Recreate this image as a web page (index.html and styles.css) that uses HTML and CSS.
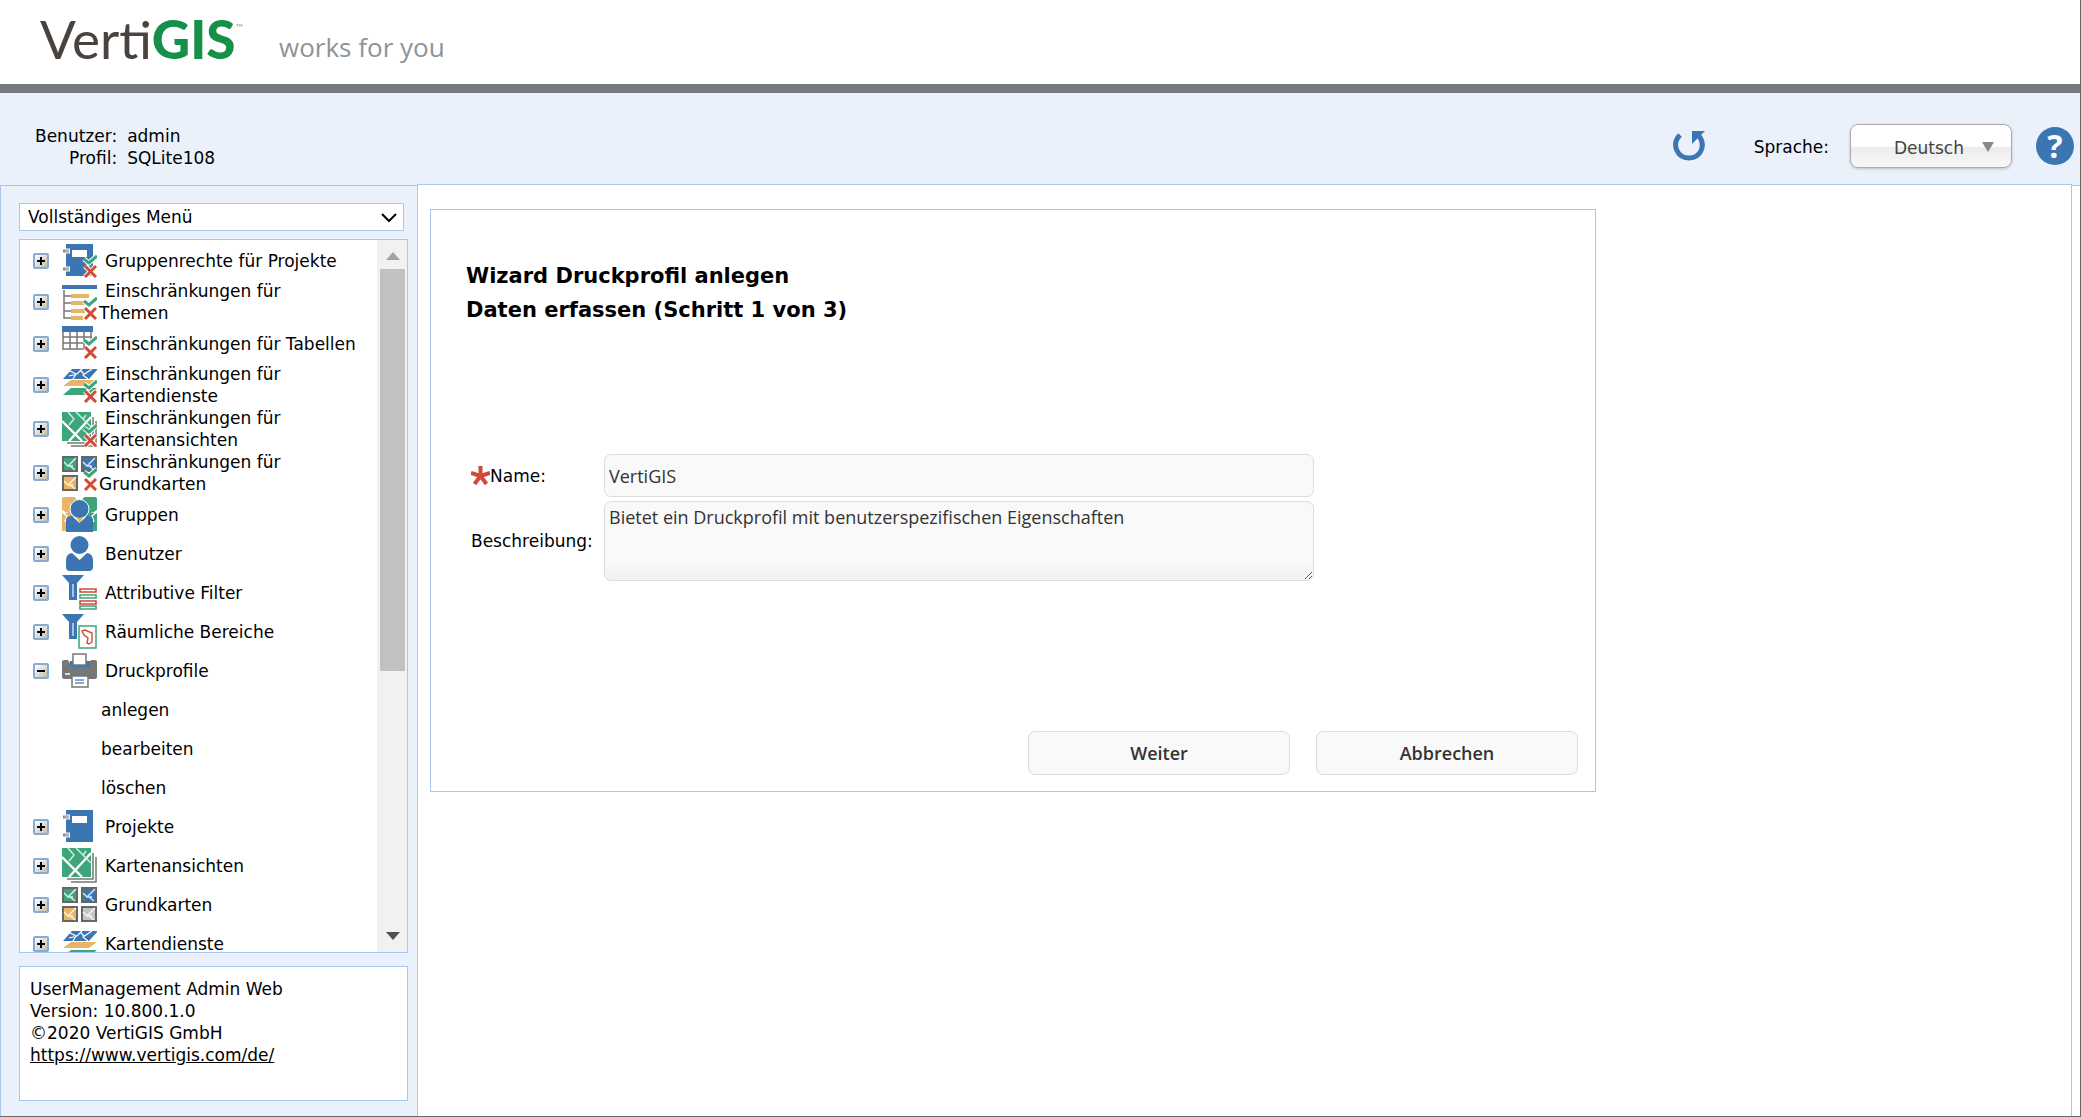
FILE: index.html
```html
<!DOCTYPE html>
<html lang="de">
<head>
<meta charset="utf-8">
<title>UserManagement Admin Web</title>
<link rel="stylesheet" href="styles.css">
</head>
<body>
<svg class="sprite" aria-hidden="true">
  <symbol id="limit" viewBox="0 0 35 35">
    <path d="M22 16l5 4 8-7M23 23l11 11M34 23L23 34" fill="none" stroke="#fff" stroke-width="5"/>
    <path d="M22 16l5 4 8-7" fill="none" stroke="#3da57a" stroke-width="3"/>
    <path d="M23 23l11 11M34 23L23 34" fill="none" stroke="#d04a35" stroke-width="3"/>
  </symbol>
  <symbol id="project" viewBox="0 0 35 35">
    <path d="M4 1h27v32H4z" fill="#3c76b2"/><path d="M10 7h15v7H10z" fill="#fff"/>
    <path d="M1 8h7M1 26h7" stroke="#fff" stroke-width="5"/><path d="M1 8h6M1 26h6" stroke="#8b8b8b" stroke-width="3"/><path d="M3 8h5M3 26h5" stroke="#ddd" stroke-width="1"/>
  </symbol>
  <symbol id="themes" viewBox="0 0 35 35">
    <path d="M0 0h35v4H0z" fill="#3c76b2"/>
    <path d="M2 5v28h8M2 11h8M2 18h8M2 26h8" fill="none" stroke="#777" stroke-width="1.5"/>
    <path d="M9 9h18v4H9zM9 16h17v4H9zM9 24h14v4H9zM9 31h12v4H9z" fill="#e9b563"/>
  </symbol>
  <symbol id="grid" viewBox="0 0 35 35">
    <path d="M1 3v20h25M1 11h29M1 17h25M8 6v17M15 6v17M22 6v17M29 6v8" fill="none" stroke="#777" stroke-width="1.5"/>
    <path d="M0 0h31v6H0z" fill="#3c76b2"/>
  </symbol>
  <symbol id="layers" viewBox="0 0 35 35">
    <path d="M9 20h26l-8 7H1z" fill="#3da57a"/>
    <path d="M9 10h26l-8 9H1z" fill="#fff"/><path d="M9 12h26l-8 6H1z" fill="#e9b563"/>
    <path d="M10 1h26l-9 10H1z" fill="#3c76b2"/>
    <path d="M8 3l6 3-3 5M20 1l-5 5-8 2M30 1l-9 6 5 4M22 6l-4-4" fill="none" stroke="#fff" stroke-width="1.2"/>
  </symbol>
  <symbol id="view" viewBox="0 0 35 35">
    <path d="M31 5v26H5M34 9v25H9" fill="none" stroke="#777" stroke-width="1.5"/>
    <path d="M0 0h29v29H0z" fill="#3da57a"/>
    <path d="M0 9l20 20M29 5L7 29" stroke="#fff" stroke-width="2.4"/>
    <path d="M6 0l6 7-5 6M14 0l15 15M21 7l3-4" fill="none" stroke="#cfe9dd" stroke-width="1.5"/>
  </symbol>
  <symbol id="tile" viewBox="0 0 16 16">
    <path d="M1 1h14v14H1z" stroke="#666" stroke-width="2"/>
    <path d="M14 2L6 10 2 6M7 9l6 5M6 10h5" fill="none" stroke="#fff" stroke-width="1.5" opacity=".8"/>
  </symbol>
  <symbol id="groups" viewBox="0 0 35 35">
    <circle cx="7" cy="7" r="9" fill="#e9b563"/><circle cx="28" cy="7" r="9" fill="#3da57a"/>
    <path d="M0 16h11v18H0z" fill="#e9b563"/><path d="M24 16h11v18H24z" fill="#3da57a"/>
    <path d="M0 15l5 4-2 6M35 15l-5 4 2 6" fill="none" stroke="#fff" stroke-width="1.5"/>
    <circle cx="17.5" cy="12" r="9.500" fill="#3c76b2" stroke="#fff"/>
    <path d="M14 21h7l-3 5z" fill="#e9b563"/>
    <path d="M4 23q0-4 6-4l7.500 7L25 19q6 0 6 4v12H4z" fill="#3c76b2"/>
  </symbol>
  <symbol id="user" viewBox="0 0 35 35">
    <circle cx="17.5" cy="9" r="9" fill="#3c76b2"/>
    <path d="M4 24q0-6 6-7l7.500 7 7.500-7q6 1 6 7v7q0 4-4 4H8q-4 0-4-4z" fill="#3c76b2"/>
  </symbol>
  <symbol id="funnel" viewBox="0 0 35 35">
    <path d="M0 0h22l-7 8v17H7V8z" fill="#3c76b2"/><path d="M10 9v13h2V9z" fill="#a8c4e2"/>
  </symbol>
  <symbol id="attributes" viewBox="0 0 35 35">
    <use href="#funnel"/>
    <path d="M18 14h16v3H18zM18 26h16v3H18z" fill="#fff" stroke="#d04a35" stroke-width="1.6"/>
    <path d="M18 20h16v3H18zM18 31h16v3H18z" fill="#fff" stroke="#3da57a" stroke-width="1.6"/>
  </symbol>
  <symbol id="areas" viewBox="0 0 35 35">
    <use href="#funnel"/>
    <path d="M17 12h17v22H17z" fill="#fff" stroke="#3da57a" stroke-width="1.5"/>
    <path d="M20 17l3-1 7 3v9l-3 2-2-1 1-5-4-3z" fill="none" stroke="#d04a35" stroke-width="1.4"/>
  </symbol>
  <symbol id="printer" viewBox="0 0 35 35">
    <path d="M0 9q0-2 2-2h4l4 7h15l4-7h4q2 0 2 2v15q0 2-2 2H2q-2 0-2-2z" fill="#777"/>
    <path d="M8 8h20v4l-2 2H10l-2-2z" fill="#3c76b2"/>
    <path d="M11 1h13v11H11zM10 23h16v11H10z" fill="#fff" stroke="#777" stroke-width="1.5"/>
    <path d="M3 21h5" stroke="#fff" stroke-width="1.5"/>
    <path d="M13 27h9M13 30h9" stroke="#5b91cf" stroke-width="1.5"/>
  </symbol>
</svg>

<header class="brand">
  <div class="logo">Verti<b>GIS</b><sup>™</sup></div>
  <div class="claim">works for you</div>
</header>

<div class="session">
  <dl class="who">
    <dt>Benutzer:</dt><dd>admin</dd>
    <dt>Profil:</dt><dd>SQLite108</dd>
  </dl>
  <div class="tools">
    <button class="icon-button reload" type="button" aria-label="Neu laden">
      <svg width="32" height="32" viewBox="0 0 32 32"><path d="M7 5C-2 14 4 28 16 28S33 15 26 6" fill="none" stroke="#3c76b2" stroke-width="5"/><path d="M19 1h13L19 14z" fill="#3c76b2"/></svg>
    </button>
    <label for="language">Sprache:</label>
    <span class="language">
      <select id="language"><option>Deutsch</option></select>
      <svg class="caret" width="12" height="10" viewBox="0 0 12 10"><path d="M0 0h12L6 10z" fill="#888"/></svg>
    </span>
    <button class="icon-button help" type="button" aria-label="Hilfe">?</button>
  </div>
</div>

<div class="workspace">
  <aside class="sidebar">
    <div class="menu-picker">
      <select aria-label="Menü"><option>Vollständiges Menü</option></select>
      <svg class="caret" width="16" height="10" viewBox="0 0 16 10"><path d="M1 1l7 7 7-7" fill="none" stroke="#000" stroke-width="2"/></svg>
    </div>
    <nav class="tree">
      <ul>
        <li><button class="toggle" aria-label="Öffnen"></button><svg class="icon"><use href="#project"/><use href="#limit"/></svg><a href="#">Gruppenrechte für Projekte</a></li>
        <li><button class="toggle" aria-label="Öffnen"></button><svg class="icon"><use href="#themes"/><use href="#limit"/></svg><a href="#">Einschränkungen für<br>Themen</a></li>
        <li><button class="toggle" aria-label="Öffnen"></button><svg class="icon"><use href="#grid"/><use href="#limit" y="-2"/></svg><a href="#">Einschränkungen für Tabellen</a></li>
        <li><button class="toggle" aria-label="Öffnen"></button><svg class="icon"><use href="#layers"/><use href="#limit"/></svg><a href="#">Einschränkungen für<br>Kartendienste</a></li>
        <li><button class="toggle" aria-label="Öffnen"></button><svg class="icon"><use href="#view"/><use href="#limit"/></svg><a href="#">Einschränkungen für<br>Kartenansichten</a></li>
        <li><button class="toggle" aria-label="Öffnen"></button><svg class="icon"><use href="#tile" width="16" height="16" fill="#3da57a"/><use href="#tile" x="19" width="16" height="16" fill="#3c76b2"/><use href="#tile" y="19" width="16" height="16" fill="#e9b563"/><use href="#limit"/></svg><a href="#">Einschränkungen für<br>Grundkarten</a></li>
        <li><button class="toggle" aria-label="Öffnen"></button><svg class="icon"><use href="#groups"/></svg><a href="#">Gruppen</a></li>
        <li><button class="toggle" aria-label="Öffnen"></button><svg class="icon"><use href="#user"/></svg><a href="#">Benutzer</a></li>
        <li><button class="toggle" aria-label="Öffnen"></button><svg class="icon"><use href="#attributes"/></svg><a href="#">Attributive Filter</a></li>
        <li><button class="toggle" aria-label="Öffnen"></button><svg class="icon"><use href="#areas"/></svg><a href="#">Räumliche Bereiche</a></li>
        <li><button class="toggle open" aria-label="Schließen"></button><svg class="icon"><use href="#printer"/></svg><a href="#">Druckprofile</a></li>
        <li class="sub"><a href="#">anlegen</a></li>
        <li class="sub"><a href="#">bearbeiten</a></li>
        <li class="sub"><a href="#">löschen</a></li>
        <li><button class="toggle" aria-label="Öffnen"></button><svg class="icon"><use href="#project"/></svg><a href="#">Projekte</a></li>
        <li><button class="toggle" aria-label="Öffnen"></button><svg class="icon"><use href="#view"/></svg><a href="#">Kartenansichten</a></li>
        <li><button class="toggle" aria-label="Öffnen"></button><svg class="icon"><use href="#tile" width="16" height="16" fill="#3da57a"/><use href="#tile" x="19" width="16" height="16" fill="#3c76b2"/><use href="#tile" y="19" width="16" height="16" fill="#e9b563"/><use href="#tile" x="19" y="19" width="16" height="16" fill="#c4c4c4"/></svg><a href="#">Grundkarten</a></li>
        <li><button class="toggle" aria-label="Öffnen"></button><svg class="icon"><use href="#layers" y="4"/></svg><a href="#">Kartendienste</a></li>
      </ul>
      <div class="scrollbar" aria-hidden="true">
        <svg width="14" height="8" viewBox="0 0 14 8"><path d="M0 8h14L7 0z" fill="#a3a3a3"/></svg>
        <div class="track"><div class="thumb"></div></div>
        <svg width="14" height="8" viewBox="0 0 14 8"><path d="M0 0h14L7 8z" fill="#505050"/></svg>
      </div>
    </nav>
    <div class="about">
      UserManagement Admin Web<br>
      Version: 10.800.1.0<br>
      ©2020 VertiGIS GmbH<br>
      <a href="https://www.vertigis.com/de/">https://www.vertigis.com/de/</a>
    </div>
  </aside>

  <main class="content">
    <form class="wizard">
      <h1>Wizard Druckprofil anlegen<br>Daten erfassen (Schritt 1 von 3)</h1>
      <div class="fields">
        <label for="name"><svg width="19" height="19" viewBox="0 0 19 19"><path d="M9.500 10V0M9.500 10L0 7M9.500 10l9.500-3M9.500 10l-6 8M9.500 10l6 8" stroke="#d04a35" stroke-width="4"/></svg>Name:</label>
        <input id="name" type="text" value="VertiGIS">
        <label for="description">Beschreibung:</label>
        <textarea id="description">Bietet ein Druckprofil mit benutzerspezifischen Eigenschaften</textarea>
      </div>
      <div class="actions">
        <button type="button">Weiter</button>
        <button type="button">Abbrechen</button>
      </div>
    </form>
  </main>
</div>
</body>
</html>
```

FILE: styles.css
```css
:root {
  --line: #a6c8ef;
  --band: #eaf1fa;
  --blue: #3c76b2;
}

* {
  box-sizing: border-box;
}

body {
  display: flex;
  flex-direction: column;
  height: 100vh;
  margin: 0;
  border: solid #666;
  border-width: 0 1px 1px 0;
  background: #fff;
  color: #000;
  font: 17px/22px "DejaVu Sans", Verdana, sans-serif;
}

a {
  color: inherit;
}

button,
select,
input,
textarea {
  margin: 0;
  font: inherit;
  color: inherit;
}

.sprite {
  position: absolute;
  width: 0;
  height: 0;
}

.brand {
  display: flex;
  align-items: flex-start;
  gap: 36px;
  flex: none;
  height: 93px;
  padding-left: 40px;
  border-bottom: 9px solid #77787b;
}

.logo {
  padding-top: 6px;
  color: #4b423f;
  font: 400 53px/66px Lato, sans-serif;
}

.logo b {
  color: #168f48;
  font-weight: 900;
}

.logo sup {
  color: #aaa;
  font-size: 10px;
  line-height: 10px;
  vertical-align: 28px;
}

.claim {
  padding-top: 30px;
  color: #8c9499;
  font: 26px/34px "Open Sans", sans-serif;
}

.session {
  display: flex;
  justify-content: space-between;
  flex: none;
  height: 91px;
  padding: 31px 6px 0 35px;
  background: var(--band);
}

.who {
  display: grid;
  grid-template-columns: auto auto;
  align-content: start;
  column-gap: 10px;
  margin: 0;
  padding-top: 1px;
}

.who dt {
  text-align: right;
}

.who dd {
  margin: 0;
}

.tools {
  display: flex;
  align-items: center;
  align-self: flex-start;
  height: 44px;
}

.tools label {
  padding-top: 2px;
}

.icon-button {
  padding: 0;
  border: 0;
  background: none;
}

.reload {
  display: flex;
  margin-right: 49px;
}

.language {
  position: relative;
  margin: 0 24px 0 21px;
}

.language select {
  display: block;
  width: 162px;
  height: 44px;
  padding: 3px 0 0 43px;
  border: 1px solid #aaa;
  border-radius: 8px;
  background: linear-gradient(#fff 50%, #ececec 54%, #f8f8f8);
  box-shadow: 0 1px 3px #0003;
  color: #444;
  appearance: none;
}

.language .caret {
  position: absolute;
  top: 18px;
  right: 18px;
}

.help {
  width: 38px;
  height: 38px;
  border-radius: 50%;
  background: var(--blue);
  color: #fff;
  font: bold 32px/38px "Open Sans", sans-serif;
}

.workspace {
  display: flex;
  flex: 1;
  min-height: 0;
  padding-right: 8px;
  background: linear-gradient(var(--band) 1px, var(--line) 1px, var(--line) 2px, #fff 2px);
}

.sidebar {
  display: flex;
  flex-direction: column;
  flex: none;
  width: 417px;
  margin-top: 1px;
  padding: 17px 9px 15px 18px;
  border: solid var(--line);
  border-width: 1px 0 0 1px;
  background: var(--band);
}

.menu-picker {
  position: relative;
  margin: 0 4px 8px 0;
}

.menu-picker select {
  display: block;
  width: 100%;
  height: 28px;
  padding: 0 8px;
  border: 1px solid var(--line);
  border-radius: 0;
  background: #fff;
  appearance: none;
}

.menu-picker .caret {
  position: absolute;
  top: 10px;
  right: 7px;
}

.tree {
  display: flex;
  flex: 1;
  min-height: 0;
  overflow: hidden;
  border: 1px solid var(--line);
  background: #fff;
}

.tree ul {
  flex: 1;
  margin: 0;
  padding: 1px 0 0 13px;
  list-style: none;
}

.tree li {
  display: flex;
  align-items: center;
  min-height: 39px;
}

.tree a {
  margin-left: 2px;
  text-decoration: none;
  text-indent: 6px;
  white-space: nowrap;
}

.tree .sub {
  padding-left: 66px;
}

.tree .sub a {
  text-indent: 0;
}

.icon {
  flex: none;
  width: 35px;
  height: 35px;
  margin-left: 13px;
}

.toggle {
  flex: none;
  width: 16px;
  height: 16px;
  padding: 0;
  border: 2px solid #86acd6;
  border-radius: 2px;
  background:
    linear-gradient(#000, #000) center / 8px 2px no-repeat,
    linear-gradient(#000, #000) center / 2px 8px no-repeat,
    linear-gradient(135deg, #fff, #c2beb2);
}

.toggle.open {
  background:
    linear-gradient(#000, #000) center / 8px 2px no-repeat,
    linear-gradient(135deg, #fff, #c2beb2);
}

.scrollbar {
  display: flex;
  flex-direction: column;
  align-items: center;
  flex: none;
  width: 30px;
  padding: 12px 2px 12px 3px;
  background: #f1f1f1;
}

.track {
  flex: 1;
  width: 25px;
  margin: 9px 0 4px;
}

.thumb {
  height: 61%;
  background: #c1c1c1;
}

.about {
  flex: none;
  height: 135px;
  margin-top: 13px;
  padding: 11px 10px;
  border: 1px solid var(--line);
  background: #fff;
}

.content {
  flex: 1;
  padding: 24px 12px;
  border: solid var(--line);
  border-width: 1px 1px 0;
  background: #fff;
}

.wizard {
  max-width: 1166px;
  padding: 49px 17px 16px 35px;
  border: 1px solid var(--line);
}

h1 {
  margin: 0 0 127px;
  font-size: 21px;
  line-height: 34px;
}

.fields {
  display: grid;
  grid-template-columns: 133px minmax(0, 710px);
  align-items: center;
  row-gap: 4px;
  margin: 0 0 150px 5px;
}

.fields label {
  display: flex;
  align-items: center;
}

.fields input,
.fields textarea,
.actions button {
  border: 1px solid #ddd;
  border-radius: 7px;
  background: #f9f9f9;
  color: #333;
  font: 18px/24px "Open Sans", "Trebuchet MS", sans-serif;
}

.fields input {
  height: 43px;
  padding: 0 4px;
}

.fields textarea {
  display: block;
  height: 80px;
  padding: 3px 4px;
  background: linear-gradient(#f9f9f9 75%, #f1f1f1);
}

.actions {
  display: flex;
  justify-content: flex-end;
  gap: 26px;
}

.actions button {
  width: 262px;
  height: 44px;
  padding: 0;
  font-weight: 600;
}
```
